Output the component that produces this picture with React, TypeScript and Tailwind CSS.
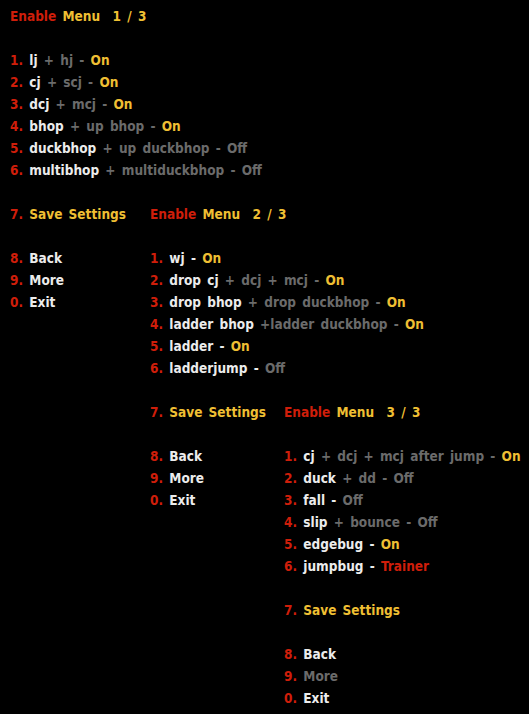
type Part = { t: string; c: "w" | "g" | "y" | "r" };

type Item = { n: string; parts: Part[] };

const color = {
  w: "text-[#ececec]",
  g: "text-[#6b6b6b]",
  y: "text-[#efbf33]",
  r: "text-[#cf1e0a]",
};

const menus: { page: string; items: Item[]; moreOff?: boolean }[] = [
  {
    page: "1 / 3",
    items: [
      { n: "1", parts: [{ t: "lj", c: "w" }, { t: " + hj - ", c: "g" }, { t: "On", c: "y" }] },
      { n: "2", parts: [{ t: "cj", c: "w" }, { t: " + scj - ", c: "g" }, { t: "On", c: "y" }] },
      { n: "3", parts: [{ t: "dcj", c: "w" }, { t: " + mcj - ", c: "g" }, { t: "On", c: "y" }] },
      { n: "4", parts: [{ t: "bhop", c: "w" }, { t: " + up bhop - ", c: "g" }, { t: "On", c: "y" }] },
      { n: "5", parts: [{ t: "duckbhop", c: "w" }, { t: " + up duckbhop - Off", c: "g" }] },
      { n: "6", parts: [{ t: "multibhop", c: "w" }, { t: " + multiduckbhop - Off", c: "g" }] },
    ],
  },
  {
    page: "2 / 3",
    items: [
      { n: "1", parts: [{ t: "wj - ", c: "w" }, { t: "On", c: "y" }] },
      { n: "2", parts: [{ t: "drop cj", c: "w" }, { t: " + dcj + mcj - ", c: "g" }, { t: "On", c: "y" }] },
      { n: "3", parts: [{ t: "drop bhop", c: "w" }, { t: " + drop duckbhop - ", c: "g" }, { t: "On", c: "y" }] },
      { n: "4", parts: [{ t: "ladder bhop", c: "w" }, { t: " +ladder duckbhop - ", c: "g" }, { t: "On", c: "y" }] },
      { n: "5", parts: [{ t: "ladder - ", c: "w" }, { t: "On", c: "y" }] },
      { n: "6", parts: [{ t: "ladderjump - ", c: "w" }, { t: "Off", c: "g" }] },
    ],
  },
  {
    page: "3 / 3",
    moreOff: true,
    items: [
      { n: "1", parts: [{ t: "cj", c: "w" }, { t: " + dcj + mcj after jump - ", c: "g" }, { t: "On", c: "y" }] },
      { n: "2", parts: [{ t: "duck", c: "w" }, { t: " + dd - Off", c: "g" }] },
      { n: "3", parts: [{ t: "fall - ", c: "w" }, { t: "Off", c: "g" }] },
      { n: "4", parts: [{ t: "slip", c: "w" }, { t: " + bounce - Off", c: "g" }] },
      { n: "5", parts: [{ t: "edgebug - ", c: "w" }, { t: "On", c: "y" }] },
      { n: "6", parts: [{ t: "jumpbug - ", c: "w" }, { t: "Trainer", c: "r" }] },
    ],
  },
];

function Line({ n, children }: { n: string; children: React.ReactNode }) {
  return (
    <div className="h-[22px]">
      <span className={color.r}>{n}. </span>
      {children}
    </div>
  );
}

function Menu({ page, items, moreOff }: { page: string; items: Item[]; moreOff?: boolean }) {
  return (
    <div className="flex flex-col whitespace-pre">
      <div className="h-[22px]">
        <span className={color.r}>Enable</span>
        <span className={color.y}>{` Menu  ${page}`}</span>
      </div>
      <div className="h-[22px]" />
      {items.map((it) => (
        <Line key={it.n} n={it.n}>
          {it.parts.map((p, i) => (
            <span key={i} className={color[p.c]}>
              {p.t}
            </span>
          ))}
        </Line>
      ))}
      <div className="h-[22px]" />
      <Line n="7">
        <span className={color.y}>Save Settings</span>
      </Line>
      <div className="h-[22px]" />
      <Line n="8">
        <span className={color.w}>Back</span>
      </Line>
      <Line n="9">
        <span className={moreOff ? color.g : color.w}>More</span>
      </Line>
      <Line n="0">
        <span className={color.w}>Exit</span>
      </Line>
    </div>
  );
}

export default function App() {
  return (
    <main
      className="w-[529px] h-[714px] overflow-hidden bg-black pt-[5px] pl-[10px] text-[13.5px] leading-[22px] font-bold [word-spacing:2px]"
      style={{ fontFamily: '"DejaVu Sans Condensed", "DejaVu Sans", sans-serif' }}
    >
      <div className="flex items-start">
        <div className="w-[140px]">
          <Menu {...menus[0]} />
        </div>
        <div className="w-[134px] mt-[198px]">
          <Menu {...menus[1]} />
        </div>
        <div className="mt-[396px]">
          <Menu {...menus[2]} />
        </div>
      </div>
    </main>
  );
}
